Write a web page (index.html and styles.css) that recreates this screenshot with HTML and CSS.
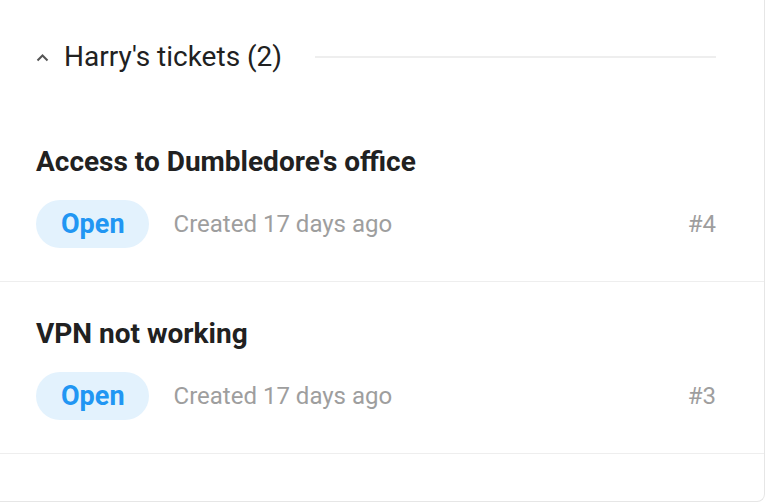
FILE: index.html
```html
<!DOCTYPE html>
<html lang="en">
<head>
    <meta charset="UTF-8">
    <meta name="viewport" content="width=device-width, initial-scale=1.0">
    <title>Harry's tickets</title>
    <link rel="stylesheet" href="styles.css">
</head>
<body>

<div class="card">
    <div class="group-header">
        <svg class="chevron" width="13" height="9" viewBox="0 0 13 9">
            <path d="M1.5 7.5 L6.5 2.5 L11.5 7.5" fill="none" stroke="#555" stroke-width="2"/>
        </svg>
        <span class="group-title">Harry's tickets (2)</span>
        <div class="group-line"></div>
    </div>

    <div class="ticket">
        <div class="ticket-title">Access to Dumbledore's office</div>
        <div class="ticket-meta">
            <span class="badge">Open</span>
            <span class="created">Created 17 days ago</span>
            <span class="ticket-id">#4</span>
        </div>
    </div>

    <div class="ticket">
        <div class="ticket-title">VPN not working</div>
        <div class="ticket-meta">
            <span class="badge">Open</span>
            <span class="created">Created 17 days ago</span>
            <span class="ticket-id">#3</span>
        </div>
    </div>
</div>

</body>
</html>
```

FILE: styles.css
```css
body {
    margin: 0;
    font-family: Roboto, 'Liberation Sans', sans-serif;
    background-color: #ffffff;
}
.card {
    width: 765px;
    box-sizing: border-box;
    padding-bottom: 47px;
    background-color: #ffffff;
    border-right: 1px solid #e6e6e6;
    border-bottom: 1px solid #e6e6e6;
    border-bottom-right-radius: 8px;
}
.group-header {
    display: flex;
    align-items: center;
    padding: 41px 48px 37px 36px;
    height: 32px;
}
.chevron {
    margin-right: 15px;
}
.group-title {
    font-size: 28px;
    line-height: 32px;
    color: #212121;
}
.group-line {
    flex: 1;
    height: 2px;
    margin-left: 33px;
    background-color: #eeeeee;
}
.ticket {
    padding: 36px 48px 33px 36px;
    border-bottom: 1px solid #eeeeee;
}
.ticket-title {
    font-size: 28px;
    line-height: 32px;
    font-weight: 700;
    color: #212121;
    margin-bottom: 22px;
}
.ticket-meta {
    display: flex;
    align-items: center;
}
.badge {
    height: 48px;
    line-height: 48px;
    padding: 0 24px 0 25px;
    border-radius: 24px;
    background-color: #e3f2fd;
    color: #2196f3;
    font-size: 27px;
    font-weight: 700;
}
.created {
    margin-left: 25px;
    font-size: 24px;
    color: #9e9e9e;
}
.ticket-id {
    margin-left: auto;
    font-size: 24px;
    color: #9e9e9e;
}
```
